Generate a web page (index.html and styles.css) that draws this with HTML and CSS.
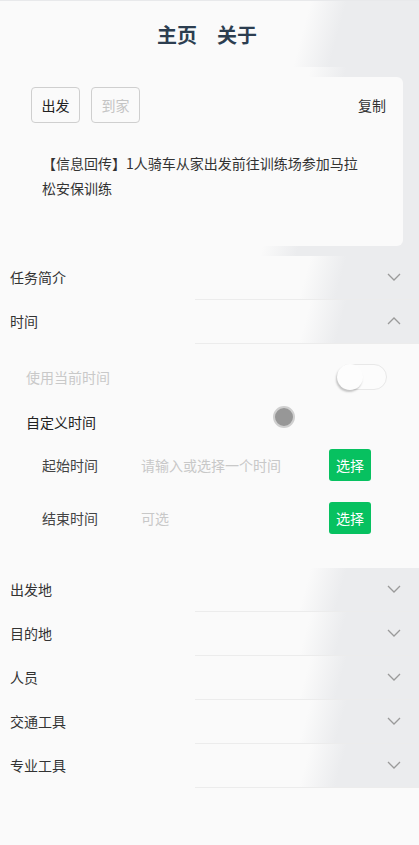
FILE: index.html
```html
<!DOCTYPE html>
<html lang="zh">
<head>
<meta charset="utf-8">
<title>主页</title>
<link rel="stylesheet" href="styles.css">
</head>
<body>
<header class="nav">
  <a class="nav-link">主页</a>
  <a class="nav-link">关于</a>
</header>

<section class="card-wrap">
  <div class="card">
    <div class="toolbar">
      <button class="btn">出发</button>
      <button class="btn btn-disabled">到家</button>
      <span class="copy">复制</span>
    </div>
    <p class="message">【信息回传】1人骑车从家出发前往训练场参加马拉松安保训练</p>
  </div>
</section>

<div class="row"><span>任务简介</span><svg class="chev" viewBox="0 0 14 8" width="14" height="8"><path d="M1 1l6 6 6-6" fill="none" stroke="#9a9a9a" stroke-width="1.3"/></svg></div>
<div class="row"><span>时间</span><svg class="chev" viewBox="0 0 14 8" width="14" height="8"><path d="M1 7l6-6 6 6" fill="none" stroke="#9a9a9a" stroke-width="1.3"/></svg></div>

<div class="panel">
  <div class="opt-row">
    <span class="opt-label disabled">使用当前时间</span>
    <span class="switch"><span class="knob"></span></span>
  </div>
  <div class="opt-row opt-custom">
    <span class="opt-label">自定义时间</span>
    <span class="radio"></span>
  </div>
  <div class="field">
    <span class="field-label">起始时间</span>
    <span class="field-input">请输入或选择一个时间</span>
    <button class="pick">选择</button>
  </div>
  <div class="field">
    <span class="field-label">结束时间</span>
    <span class="field-input">可选</span>
    <button class="pick">选择</button>
  </div>
</div>

<div class="row"><span>出发地</span><svg class="chev" viewBox="0 0 14 8" width="14" height="8"><path d="M1 1l6 6 6-6" fill="none" stroke="#9a9a9a" stroke-width="1.3"/></svg></div>
<div class="row"><span>目的地</span><svg class="chev" viewBox="0 0 14 8" width="14" height="8"><path d="M1 1l6 6 6-6" fill="none" stroke="#9a9a9a" stroke-width="1.3"/></svg></div>
<div class="row"><span>人员</span><svg class="chev" viewBox="0 0 14 8" width="14" height="8"><path d="M1 1l6 6 6-6" fill="none" stroke="#9a9a9a" stroke-width="1.3"/></svg></div>
<div class="row"><span>交通工具</span><svg class="chev" viewBox="0 0 14 8" width="14" height="8"><path d="M1 1l6 6 6-6" fill="none" stroke="#9a9a9a" stroke-width="1.3"/></svg></div>
<div class="row"><span>专业工具</span><svg class="chev" viewBox="0 0 14 8" width="14" height="8"><path d="M1 1l6 6 6-6" fill="none" stroke="#9a9a9a" stroke-width="1.3"/></svg></div>
</body>
</html>
```

FILE: styles.css
```css
* { box-sizing: border-box; }

body {
  margin: 0;
  background: #fafafa;
  font-family: "Noto Sans CJK SC", "Noto Sans", sans-serif;
  font-size: 14px;
  color: #333;
  border-top: 1px solid #e8e9eb;
  min-height: 845px;
}

.nav, .card-wrap, .row {
  background: linear-gradient(105deg, #fafafa 0, #fafafa 300px, #ebecee 335px, #ebecee 100%);
}

.nav {
  height: 66px;
  display: flex;
  justify-content: center;
  align-items: center;
  gap: 20px;
  padding: 2px 5px 0 0;
}

.nav-link {
  font-size: 20px;
  font-weight: 700;
  color: #2c3e50;
  line-height: 1;
}

.card-wrap {
  padding: 10px 16px 10px 16px;
}

.card {
  background: #fafafa;
  border-radius: 6px;
  padding: 10px 17px 45px 15px;
}

.toolbar {
  display: flex;
  align-items: center;
  gap: 11px;
}

.btn {
  width: 49px;
  height: 36px;
  border: 1px solid #cfcfcf;
  border-radius: 4px;
  background: #fafafa;
  font-family: inherit;
  font-size: 14px;
  color: #222;
  padding: 0;
}

.btn-disabled { color: #c4c4c4; }

.copy {
  margin-left: auto;
  color: #333;
  line-height: 20px;
}

.message {
  margin: 28px 0 0 11px;
  max-width: 322px;
  line-height: 25px;
  color: #333;
}

.row {
  height: 44px;
  display: flex;
  align-items: center;
  justify-content: space-between;
  padding: 0 18px 3px 10px;
  position: relative;
  color: #333;
}

.row::after {
  content: "";
  position: absolute;
  left: 195px;
  right: 0;
  bottom: 0;
  height: 1px;
  background: #ececec;
}

.chev { display: block; }

.panel {
  padding: 11px 0 34px 0;
  background: #fafafa;
}

.opt-row {
  height: 44px;
  display: flex;
  align-items: center;
  justify-content: space-between;
  padding: 0 32px 0 26px;
}

.opt-custom {
  height: 46px;
  justify-content: flex-start;
}

.opt-label { color: #222; }
.opt-label.disabled { color: #c9c9c9; }

.switch {
  width: 50px;
  height: 26px;
  border: 1px solid #e8e8e8;
  border-radius: 13px;
  background: #fcfcfc;
  position: relative;
}

.knob {
  position: absolute;
  left: -1px;
  top: -1px;
  width: 26px;
  height: 26px;
  border-radius: 50%;
  background: #fdfdfd;
  box-shadow: -1px 2px 2px rgba(0, 0, 0, 0.22);
}

.radio {
  align-self: flex-start;
  margin: 7px 0 0 177px;
  width: 22px;
  height: 22px;
  border-radius: 50%;
  background: #979797;
  border: 2px solid #cfcfcf;
}

.field {
  display: flex;
  align-items: center;
  height: 32px;
  padding: 0 48px 0 42px;
  margin-top: 4px;
}

.field + .field { margin-top: 21px; }

.field-label {
  width: 99px;
  color: #444;
}

.field-input {
  flex: 1;
  color: #c8c8c8;
}

.pick {
  width: 42px;
  height: 32px;
  border: none;
  border-radius: 3px;
  background: #07c160;
  color: #fff;
  font-family: inherit;
  font-size: 14px;
  padding: 0;
}
```
